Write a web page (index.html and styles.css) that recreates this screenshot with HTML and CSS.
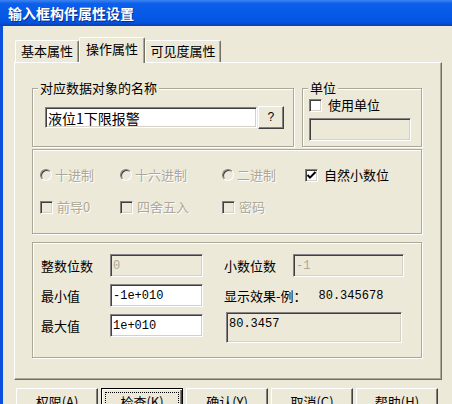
FILE: index.html
```html
<!DOCTYPE html>
<html lang="zh-CN">
<head>
<meta charset="utf-8">
<title>输入框构件属性设置</title>
<link rel="stylesheet" href="styles.css">
</head>
<body>
<div class="window">
  <div class="titlebar">输入框构件属性设置</div>
  <div class="frame">
    <div class="tabs">
      <div class="tab">基本属性</div>
      <div class="tab tab-active">操作属性</div>
      <div class="tab tab-wide">可见度属性</div>
    </div>
    <div class="panel">
      <div class="row1">
        <div class="group group-name">
          <div class="legend">对应数据对象的名称</div>
          <div class="name-row">
            <div class="field field-name">液位1下限报警</div>
            <div class="btn btn-q">?</div>
          </div>
        </div>
        <div class="group group-unit">
          <div class="legend">单位</div>
          <div class="check-row">
            <span class="check check-on"></span><span class="label">使用单位</span>
          </div>
          <div class="field field-unit disabled"></div>
        </div>
      </div>

      <div class="group group-opts">
        <div class="opts">
          <div class="opt"><span class="radio"></span><span class="dis">十进制</span></div>
          <div class="opt"><span class="radio"></span><span class="dis">十六进制</span></div>
          <div class="opt"><span class="radio"></span><span class="dis">二进制</span></div>
          <div class="opt opt-checked"><span class="check check-on"><svg width="11" height="11" viewBox="0 0 11 11"><path d="M1.5 5 L4 7.6 L9.5 2" fill="none" stroke="#000" stroke-width="2"/></svg></span><span class="label">自然小数位</span></div>
          <div class="opt opt-c"><span class="check"></span><span class="dis">前导0</span></div>
          <div class="opt opt-c"><span class="check"></span><span class="dis">四舍五入</span></div>
          <div class="opt opt-c"><span class="check"></span><span class="dis">密码</span></div>
        </div>
      </div>

      <div class="group group-num">
        <div class="numgrid">
          <div class="lbl">整数位数</div>
          <div class="field field-num disabled">0</div>
          <div></div>
          <div class="lbl">小数位数</div>
          <div class="field field-dec disabled">-1</div>

          <div class="lbl">最小值</div>
          <div class="field field-num">-1e+010</div>
          <div></div>
          <div class="example"><span>显示效果-例：</span><span class="mono ex-val">80.345678</span></div>

          <div class="lbl">最大值</div>
          <div class="field field-num">1e+010</div>
          <div></div>
          <div class="field field-out">80.3457</div>
        </div>
      </div>
    </div>

    <div class="buttons">
      <div class="btn btn-foot">权限(A)</div>
      <div class="btn btn-foot btn-focus">检查(K)</div>
      <div class="btn btn-foot">确认(Y)</div>
      <div class="btn btn-foot">取消(C)</div>
      <div class="btn btn-foot">帮助(H)</div>
    </div>
  </div>
</div>
</body>
</html>
```

FILE: styles.css
```css
html, body {
  margin: 0;
  padding: 0;
}
body {
  font-family: "Noto Sans CJK SC", sans-serif;
  font-size: 13px;
  color: #000;
  background: #ECE9D8;
}
.window {
  width: 452px;
  height: 404px;
  overflow: hidden;
  background: #ECE9D8;
}
.titlebar {
  box-sizing: border-box;
  height: 26px;
  padding-left: 8px;
  display: flex;
  align-items: center;
  color: #fff;
  font-weight: bold;
  font-size: 14px;
  line-height: 16px;
  text-shadow: 1px 1px 0 #0a2a8a;
  background: linear-gradient(#3d84f2 0, #0c5fe9 14%, #0658e6 60%, #0553e0 85%, #0747c4 94%, #1a3c9c 100%);
}
.frame {
  box-sizing: border-box;
  height: 378px;
  border-left: 3px solid #0b50dc;
}
.tabs {
  display: flex;
  align-items: flex-end;
  height: 25px;
  padding-top: 11px;
  margin-left: 12px;
}
.tab {
  box-sizing: border-box;
  width: 64px;
  height: 22px;
  line-height: 20px;
  text-align: center;
  border: 1px solid #fff;
  border-bottom: none;
  border-right-color: #716f64;
  box-shadow: inset -1px 0 #aca899;
  border-radius: 2px 2px 0 0;
}
.tab-active {
  position: relative;
  z-index: 1;
  width: 66px;
  height: 26px;
  margin-bottom: -1px;
  line-height: 22px;
  padding-bottom: 2px;
  background: #ECE9D8;
}
.tab-wide {
  width: 76px;
}
.panel {
  box-sizing: border-box;
  width: 428px;
  height: 318px;
  margin-left: 11px;
  padding: 25px 0 0 17px;
  border: 1px solid #fff;
  border-right-color: #716f64;
  border-bottom-color: #716f64;
  box-shadow: inset -1px -1px #aca899;
}
.group {
  box-sizing: border-box;
  border: 1px solid #aca899;
  box-shadow: inset 1px 1px #fff, 1px 1px #fff;
}
.legend {
  display: table;
  margin: -8px 0 0 5px;
  padding: 0 2px;
  line-height: 14px;
  background: #ECE9D8;
}
.row1 {
  display: flex;
  gap: 8px;
}
.group-name {
  width: 262px;
  height: 59px;
}
.name-row {
  display: flex;
  align-items: center;
  margin: 11px 0 0 12px;
}
.field {
  box-sizing: border-box;
  background: #fff;
  border: 1px solid;
  border-color: #848284 #fff #fff #848284;
  box-shadow: inset 1px 1px #404040, inset -1px -1px #d4d0c8;
  padding: 0 3px;
  display: flex;
  align-items: center;
  white-space: nowrap;
}
.field.disabled {
  background: #ECE9D8;
  color: #aca899;
}
.field-name {
  width: 212px;
  height: 21px;
  line-height: 16px;
  padding-left: 2px;
  font-size: 14px;
}
.btn {
  box-sizing: border-box;
  border: 1px solid;
  border-color: #fff #404040 #404040 #fff;
  box-shadow: inset -1px -1px #808080;
  background: #ECE9D8;
  display: flex;
  align-items: center;
  justify-content: center;
}
.btn-q {
  width: 26px;
  height: 23px;
  margin-left: 1px;
  font-family: "Liberation Mono", monospace;
  font-size: 12px;
}
.group-unit {
  width: 120px;
  height: 59px;
  padding-left: 6px;
}
.check-row {
  display: flex;
  align-items: center;
  gap: 6px;
  height: 16px;
  margin-top: 2px;
  margin-left: -5px;
  padding-left: 5px;
}
.group-unit .legend {
  margin-left: -1px;
}
.check {
  box-sizing: border-box;
  width: 13px;
  height: 13px;
  flex: none;
  border: 1px solid;
  border-color: #808080 #fff #fff #808080;
  box-shadow: inset 1px 1px #404040, inset -1px -1px #d4d0c8;
  background: #ECE9D8;
  display: flex;
  align-items: center;
  justify-content: center;
}
.check-on {
  background: #fff;
}
.field-unit {
  width: 102px;
  height: 23px;
  margin-top: 5px;
}
.label {
  line-height: 16px;
}
.dis {
  color: #aca899;
  text-shadow: 1px 1px 0 #fff;
  line-height: 16px;
}
.group-opts {
  width: 390px;
  height: 85px;
  margin-top: 2px;
  padding: 17px 0 0 7px;
}
.opts {
  display: grid;
  grid-template-columns: 80px 102px 83px auto;
  grid-template-rows: 16px 16px;
  row-gap: 16px;
}
.opt {
  display: flex;
  align-items: center;
  gap: 3px;
}
.opt-c {
  gap: 4px;
}
.opt-checked {
  gap: 6px;
}
.radio {
  box-sizing: border-box;
  width: 12px;
  height: 12px;
  flex: none;
  border-radius: 50%;
  border: 1px solid;
  border-color: #808080 #fff #fff #808080;
  box-shadow: inset 1px 1px #404040;
  background: #ECE9D8;
}
.group-num {
  width: 390px;
  height: 116px;
  margin-top: 8px;
  padding: 11px 0 0 8px;
}
.numgrid {
  display: grid;
  grid-template-columns: 69px 93px 21px 69px 111px;
  grid-template-rows: 23px 23px 23px;
  row-gap: 7px;
  align-items: center;
}
.lbl {
  line-height: 16px;
}
.field-num {
  height: 23px;
  padding-left: 2px;
  font-family: "Liberation Mono", monospace;
  font-size: 12px;
}
.field-dec {
  height: 23px;
  padding-left: 2px;
  font-family: "Liberation Mono", monospace;
  font-size: 12px;
}
.example {
  grid-column: 4 / 6;
  display: flex;
  align-items: center;
  white-space: nowrap;
  line-height: 16px;
}
.mono {
  font-family: "Liberation Mono", monospace;
  font-size: 12px;
}
.ex-val {
  margin-left: 12px;
}
.field-out {
  grid-column: 4 / 6;
  align-self: start;
  align-items: flex-start;
  width: 176px;
  height: 31px;
  margin: -2px 0 0 2px;
  padding: 3px 2px 0;
  background: #ECE9D8;
  font-family: "Liberation Mono", monospace;
  font-size: 12px;
  line-height: 16px;
}
.buttons {
  display: flex;
  gap: 3px;
  margin: 8px 0 0 13px;
}
.btn-foot {
  width: 82px;
  height: 25px;
  line-height: 16px;
  padding-top: 2px;
}
.btn-focus {
  border: 1px solid #000;
  box-shadow: inset 1px 1px #fff, inset -1px -1px #404040, inset -2px -2px #808080;
  outline: 1px dotted #000;
  outline-offset: -5px;
}
```
